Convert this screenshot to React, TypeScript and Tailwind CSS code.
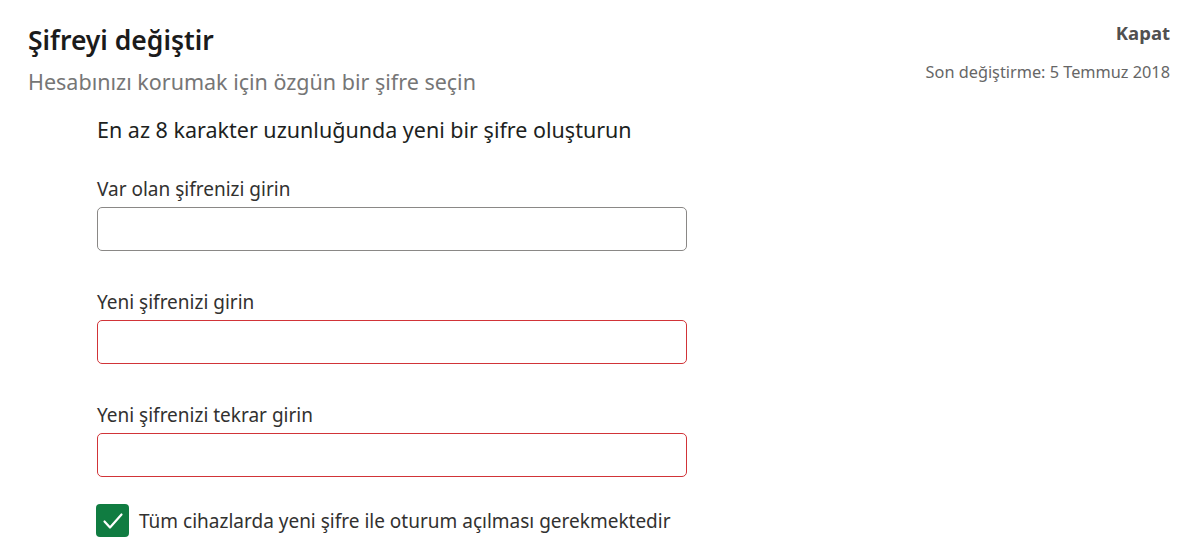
import React from 'react'

const font = { fontFamily: '"Noto Sans", "Open Sans", sans-serif' }

const Field = ({ label, invalid, className }: { label: string; invalid?: boolean; className?: string }) => (
  <div className={className}>
    <label className="block text-[19px] leading-[24px] text-[#323130]">{label}</label>
    <input
      type="password"
      className={`mt-[6px] block h-[44px] w-[590px] rounded-[5px] border bg-white px-3 outline-none ${
        invalid ? 'border-[#d13438]' : 'border-[#8a8886]'
      }`}
    />
  </div>
)

const App = () => {
  return (
    <div className="h-[560px] w-[1200px] bg-white" style={font}>
      <header className="flex justify-between px-[28px] pt-[21px]">
        <div className="pt-[3px]">
          <h1 className="text-[26.5px] font-semibold leading-[32px] text-[#1b1b1b]">Şifreyi değiştir</h1>
          <p className="mt-[12px] text-[21.5px] leading-[28px] text-[#767676]">
            Hesabınızı korumak için özgün bir şifre seçin
          </p>
        </div>
        <div className="pr-[2px] text-right">
          <button className="text-[18.5px] font-bold leading-[24px] text-[#505050]">Kapat</button>
          <p className="mt-[15px] text-[16.3px] leading-[22px] text-[#666]">Son değiştirme: 5 Temmuz 2018</p>
        </div>
      </header>

      <section className="pl-[97px] pt-[20px]">
        <h2 className="text-[21.5px] leading-[28px] text-[#201f1e]">
          En az 8 karakter uzunluğunda yeni bir şifre oluşturun
        </h2>
        <Field className="mt-[33px]" label="Var olan şifrenizi girin" />
        <Field className="mt-[39px]" label="Yeni şifrenizi girin" invalid />
        <Field className="mt-[39px]" label="Yeni şifrenizi tekrar girin" invalid />

        <label className="-ml-[1px] mt-[27px] flex items-center gap-[10px]">
          <span className="flex h-[33px] w-[33px] items-center justify-center rounded-[4px] bg-[#107c41]">
            <svg width="22" height="22" viewBox="0 0 22 22" fill="none">
              <path d="M2.5 11.5l5.5 6L19.5 4.5" stroke="white" strokeWidth="2.2" strokeLinecap="round" strokeLinejoin="round" />
            </svg>
          </span>
          <span className="text-[19px] leading-[24px] text-[#323130]">
            Tüm cihazlarda yeni şifre ile oturum açılması gerekmektedir
          </span>
        </label>
      </section>
    </div>
  )
}

export default App
